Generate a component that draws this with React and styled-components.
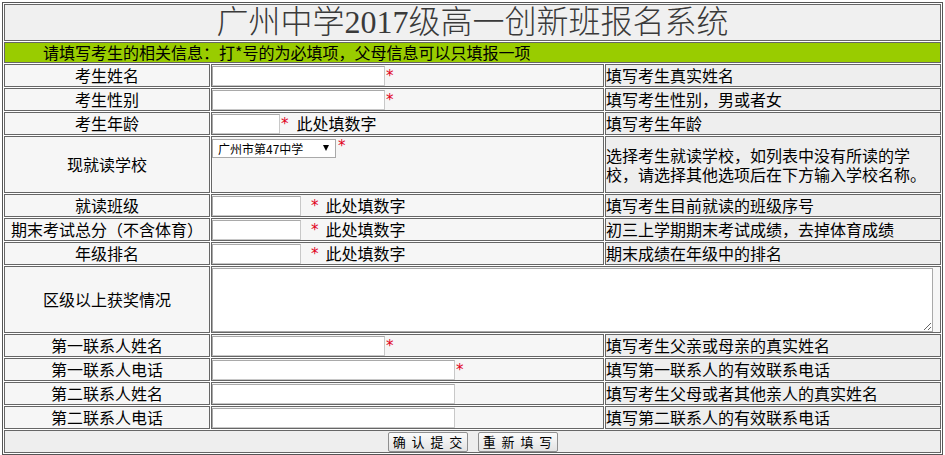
import React from 'react';
import styled, { createGlobalStyle } from 'styled-components';

const GlobalStyle = createGlobalStyle`
  body {
    margin: 0;
    background: #fff;
    color: #000;
    font-family: "Noto Sans CJK SC", sans-serif;
    font-size: 16px;
  }
`;

const FormTable = styled.table`
  margin: 2px 0 0 2px;
  border: 1px solid #555;
  border-collapse: separate;
  border-spacing: 1px;
  background: #fff;
`;

const BaseCell = styled.td`
  border: 1px solid #666;
  padding: 0;
  height: ${p => p.$h || 21}px;
  line-height: 19px;
  font-size: 16px;
  vertical-align: middle;
  background: #f6f6f6;
`;

const TitleCell = styled(BaseCell)`
  height: 35px;
  background: #f0f0f0;
  text-align: center;
  font-family: "Liberation Serif", "Noto Sans CJK SC", serif;
  font-size: 32px;
  font-weight: 300;
  line-height: 35px;
  color: #3a3a3a;
`;

const NoticeCell = styled(BaseCell)`
  height: 19px;
  background: #99cc00;
  padding-left: 38px;
`;

const LabelCell = styled(BaseCell)`
  width: 204px;
  text-align: center;
`;

const FieldCell = styled(BaseCell)`
  width: ${p => (p.$wide ? 'auto' : '391px')};
`;

const HintCell = styled(BaseCell)`
  width: 334px;
  background: #eeeeee;
`;

const ButtonCell = styled(BaseCell)`
  background: #eeeeee;
`;

const FieldWrap = styled.div`
  display: flex;
  align-items: ${p => (p.$top ? 'flex-start' : 'center')};
  height: 100%;
  padding-top: ${p => (p.$top ? 1 : 0)}px;
  box-sizing: border-box;
`;

const TextInput = styled.input`
  box-sizing: border-box;
  width: ${p => p.$w}px;
  height: 20px;
  margin: 0;
  padding: 0 2px;
  border: 1px solid #a9a9a9;
  border-right-color: #c8c8c8;
  border-bottom-color: #c8c8c8;
  background: #fff;
  font-size: 14px;
`;

const Star = styled.span`
  align-self: flex-start;
  margin-top: ${p => (p.$high ? 1 : 4)}px;
  margin-left: ${p => p.$gap || 1}px;
  color: #e0001b;
  font-family: "DejaVu Sans", sans-serif;
  font-size: 15px;
  line-height: 15px;
`;

const Note = styled.span`
  margin-left: ${p => p.$gap || 8}px;
`;

const SelectBox = styled.div`
  position: relative;
  width: 124px;
  height: 19px;
`;

const Select = styled.select`
  appearance: none;
  box-sizing: border-box;
  width: 100%;
  height: 100%;
  margin: 0;
  padding: 0 0 0 5px;
  border: 1px solid #a9a9a9;
  border-radius: 0;
  background: #fff;
  color: #000;
  font-family: "Noto Sans CJK SC", sans-serif;
  font-size: 12px;
  line-height: 17px;
`;

const Arrow = styled.span`
  position: absolute;
  right: 7px;
  top: 7px;
  width: 0;
  height: 0;
  border-left: 3.5px solid transparent;
  border-right: 3.5px solid transparent;
  border-top: 6px solid #000;
  pointer-events: none;
`;

const AwardBox = styled.textarea`
  display: block;
  box-sizing: border-box;
  width: 721px;
  height: 64px;
  margin: 0;
  border: 1px solid #a9a9a9;
  background: #fff;
  font-size: 14px;
`;

const ButtonBar = styled.div`
  display: flex;
  justify-content: center;
  align-items: center;
  gap: 10px;
  height: 100%;
`;

const Button = styled.button`
  box-sizing: border-box;
  width: 80px;
  height: 20px;
  padding: 0;
  border: 1px solid #8f8f8f;
  border-radius: 2px;
  background: linear-gradient(#fbfbfb, #e3e3e3);
  color: #000;
  font-family: "Noto Sans CJK SC", sans-serif;
  font-size: 13px;
  line-height: 18px;
  word-spacing: 3px;
`;

const Field = ({ w, star, starGap, note, noteGap }) => (
  <FieldWrap>
    <TextInput type="text" $w={w} />
    {star && <Star $gap={starGap}>*</Star>}
    {note && <Note $gap={noteGap}>{note}</Note>}
  </FieldWrap>
);

const rowsTop = [
  { label: '考生姓名', field: <Field w={173} star />, hint: '填写考生真实姓名' },
  { label: '考生性别', field: <Field w={173} star />, hint: '填写考生性别，男或者女' },
  { label: '考生年龄', field: <Field w={68} star note="此处填数字" noteGap={8} />, hint: '填写考生年龄' },
];

const rowsMid = [
  { label: '就读班级', field: <Field w={89} star starGap={10} note="此处填数字" noteGap={7} />, hint: '填写考生目前就读的班级序号' },
  { label: '期末考试总分（不含体育）', field: <Field w={89} star starGap={10} note="此处填数字" noteGap={7} />, hint: '初三上学期期末考试成绩，去掉体育成绩' },
  { label: '年级排名', field: <Field w={89} star starGap={10} note="此处填数字" noteGap={7} />, hint: '期末成绩在年级中的排名' },
];

const rowsBottom = [
  { label: '第一联系人姓名', field: <Field w={173} star />, hint: '填写考生父亲或母亲的真实姓名' },
  { label: '第一联系人电话', field: <Field w={243} star />, hint: '填写第一联系人的有效联系电话' },
  { label: '第二联系人姓名', field: <Field w={243} />, hint: '填写考生父母或者其他亲人的真实姓名' },
  { label: '第二联系人电话', field: <Field w={243} />, hint: '填写第二联系人的有效联系电话' },
];

const renderRows = list =>
  list.map(r => (
    <tr key={r.label}>
      <LabelCell>{r.label}</LabelCell>
      <FieldCell>{r.field}</FieldCell>
      <HintCell>{r.hint}</HintCell>
    </tr>
  ));

const App = () => (
  <>
    <GlobalStyle />
    <form onSubmit={e => e.preventDefault()}>
      <FormTable>
        <tbody>
          <tr>
            <TitleCell colSpan={3}>广州中学2017级高一创新班报名系统</TitleCell>
          </tr>
          <tr>
            <NoticeCell colSpan={3}>请填写考生的相关信息：打*号的为必填项，父母信息可以只填报一项</NoticeCell>
          </tr>
          {renderRows(rowsTop)}
          <tr>
            <LabelCell $h={55}>现就读学校</LabelCell>
            <FieldCell $h={55}>
              <FieldWrap $top>
                <SelectBox>
                  <Select defaultValue="47">
                    <option value="47">广州市第47中学</option>
                    <option value="other">其他</option>
                  </Select>
                  <Arrow />
                </SelectBox>
                <Star $gap={2} $high>*</Star>
              </FieldWrap>
            </FieldCell>
            <HintCell $h={55}>选择考生就读学校，如列表中没有所读的学校，请选择其他选项后在下方输入学校名称。</HintCell>
          </tr>
          {renderRows(rowsMid)}
          <tr>
            <LabelCell $h={65}>区级以上获奖情况</LabelCell>
            <FieldCell $h={65} $wide colSpan={2}>
              <AwardBox />
            </FieldCell>
          </tr>
          {renderRows(rowsBottom)}
          <tr>
            <ButtonCell colSpan={3}>
              <ButtonBar>
                <Button type="submit">确 认 提 交</Button>
                <Button type="reset">重 新 填 写</Button>
              </ButtonBar>
            </ButtonCell>
          </tr>
        </tbody>
      </FormTable>
    </form>
  </>
);

export default App;
